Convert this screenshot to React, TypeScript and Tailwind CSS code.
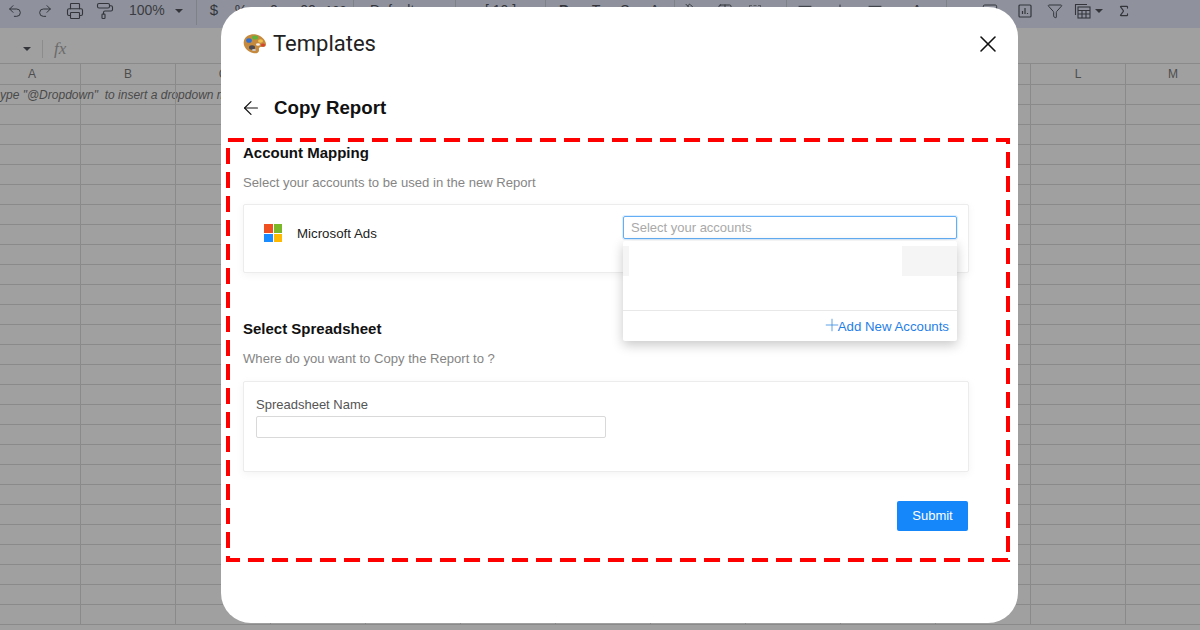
import React from "react";
import {
  AlignLeft,
  ArrowDownToLine,
  ArrowLeft,
  Funnel,
  MessageSquare,
  PaintBucket,
  PaintRoller,
  Plus,
  Printer,
  Redo2,
  Sigma,
  Table,
  Undo2,
  WrapText,
  X,
} from "lucide-react";

const columns = ["A", "B", "C", "D", "E", "F", "G", "H", "I", "J", "K", "L", "M"];
const rows = Array.from({ length: 27 }, (_, i) => i);

const Caret = () => (
  <span className="block h-0 w-0 border-x-[4px] border-t-[4px] border-x-transparent border-t-[#33353b]" />
);

const ToolbarDivider = () => <span className="h-[28px] w-px bg-[#7f8189]" />;

const Toolbar = () => (
  <div className="flex h-[28px] items-center overflow-hidden bg-[#8f929d] pb-[7px] text-[#33353b] [&>*]:shrink-0">
    <div className="flex w-[30px] justify-center"><Undo2 size={16} strokeWidth={1.5} /></div>
    <div className="flex w-[29px] justify-center"><Redo2 size={16} strokeWidth={1.5} /></div>
    <div className="flex w-[31px] justify-center"><Printer size={18} strokeWidth={1.5} /></div>
    <div className="flex w-[30px] justify-center"><PaintRoller size={18} strokeWidth={1.5} /></div>
    <div className="w-[49px] pl-[9px] text-[14px] text-[#3a3c42]">100%</div>
    <div className="w-[27px] pl-[6px]"><Caret /></div>
    <ToolbarDivider />
    <div className="w-[34px] text-center text-[15px]">$</div>
    <div className="w-[20px] text-center text-[14px]">%</div>
    <div className="w-[42px] text-center text-[14px]">.0</div>
    <div className="w-[26px] text-center text-[14px]">.00</div>
    <div className="w-[34px] text-center text-[13px]">123</div>
    <ToolbarDivider />
    <div className="w-[101px] pl-[16px] text-[14px]">Default</div>
    <ToolbarDivider />
    <div className="w-[89px] pl-[29px] text-[14px]">[ 10 ]</div>
    <ToolbarDivider />
    <div className="w-[36px] text-center text-[14px] font-bold">B</div>
    <div className="w-[26px] text-center text-[14px] italic">T</div>
    <div className="w-[34px] text-center text-[14px]">S</div>
    <div className="w-[32px] pl-[8px] text-[14px]">A</div>
    <ToolbarDivider />
    <div className="flex w-[30px] justify-center"><PaintBucket size={16} strokeWidth={1.5} /></div>
    <div className="flex w-[40px] justify-center"><Table size={16} strokeWidth={1.5} /></div>
    <div className="flex w-[20px] justify-center"><span className="h-[12px] w-[12px] border border-dashed border-[#5a5c63]" /></div>
    <div className="w-[21px]" />
    <ToolbarDivider />
    <div className="flex w-[36px] justify-center"><AlignLeft size={16} strokeWidth={1.5} /></div>
    <div className="flex w-[34px] justify-center"><ArrowDownToLine size={16} strokeWidth={1.5} /></div>
    <div className="flex w-[36px] justify-center"><WrapText size={16} strokeWidth={1.5} /></div>
    <div className="w-[48px] text-center text-[14px]">A</div>
    <div className="w-[5px]" />
    <ToolbarDivider />
    <div className="flex w-[61px] justify-end pr-[10px]"><MessageSquare size={16} strokeWidth={1.5} /></div>
    <div className="flex w-[34px] justify-center">
      <svg width="16" height="16" viewBox="0 0 16 16" fill="none" stroke="#33353b" strokeWidth="1.2">
        <rect x="2" y="2" width="12" height="12" rx="1" />
        <path d="M5.500 11V8M8 11V5M10.500 11v-1" />
      </svg>
    </div>
    <div className="flex w-[26px] justify-center"><Funnel size={16} strokeWidth={1.5} /></div>
    <div className="flex w-[40px] items-center pl-[6px]">
      <svg width="18" height="18" viewBox="0 0 18 18" fill="none" stroke="#33353b" strokeWidth="1.1">
        <path d="M1.500 13V2.500H13" />
        <rect x="4" y="5" width="12" height="11" />
        <path d="M4 8.500h12M4 12h12M8 8.500V16M12 8.500V16" />
      </svg>
      <span className="ml-[3px]"><Caret /></span>
    </div>
    <div className="flex w-[32px] justify-center"><Sigma size={14} strokeWidth={2} /></div>
  </div>
);

const FormulaBar = () => (
  <div className="flex h-[35px] items-center bg-[#a0a0a0] pl-[23px] pt-[7px]">
    <Caret />
    <span className="ml-[11px] h-[18px] w-px bg-[#8c8c8c]" />
    <span className="ml-[11px] font-['Liberation_Serif',serif] text-[17px] italic text-[#6a6a6a]">fx</span>
  </div>
);

const Sheet = () => (
  <div className="bg-[#a0a0a0]">
    <div className="flex h-[22px] border-y border-[#8a8a8a]">
      {columns.map((col, i) => (
        <div
          key={col}
          className={`flex shrink-0 items-center justify-center border-r border-[#8a8a8a] text-[12px] text-[#4e4e4e] ${
            i === 0 ? "w-[81px]" : "w-[95px]"
          }`}
        >
          <span className={i === 0 ? "mr-[16px]" : ""}>{col}</span>
        </div>
      ))}
    </div>
    {rows.map((row) => (
      <div key={row} className="flex h-[20px] border-b border-[#8a8a8a]">
        {columns.map((col, i) => (
          <div
            key={col}
            className={`shrink-0 border-r border-[#8a8a8a] ${i === 0 ? "w-[81px]" : "w-[95px]"}`}
          >
            {row === 0 && i === 0 && (
              <span className="block whitespace-pre text-[12px] italic leading-[20px] text-[#4a4a4a]">
                {'ype "@Dropdown"  to insert a dropdown menu'}
              </span>
            )}
          </div>
        ))}
      </div>
    ))}
  </div>
);

const PaletteIcon = () => (
  <svg width="24" height="22" viewBox="0 0 24 22">
    <path
      d="M1 7.500C2.500 2.500 8 0.500 13 1.500c5 1 9.500 5 10 9.500.3 2.500-2 3.200-4 3-2-.2-3.500.3-3 2.600.4 2-1.500 4.200-5 3.700C5 19.500-.8 13.500 1 7.500z"
      fill="#c68a3e"
    />
    <ellipse cx="6" cy="7.500" rx="2.800" ry="2.300" fill="#2f6fd0" />
    <ellipse cx="12" cy="4.500" rx="3" ry="2" fill="#5fb23c" />
    <ellipse cx="17.500" cy="8" rx="2.500" ry="1.700" fill="#eec24c" />
    <ellipse cx="20" cy="12" rx="2" ry="1.500" fill="#d8402f" />
    <ellipse cx="15" cy="11.500" rx="2" ry="1.300" fill="#f2f2f2" />
    <ellipse cx="9" cy="14.500" rx="3" ry="2.200" fill="#4a4a55" />
    <ellipse cx="11" cy="17" rx="2" ry="1" fill="#c9ccd4" />
  </svg>
);

const MicrosoftLogo = () => (
  <div className="grid h-[18px] w-[18px] grid-cols-2 gap-px">
    <span className="bg-[#f0501f]" />
    <span className="bg-[#7ab827]" />
    <span className="bg-[#1a8cff]" />
    <span className="bg-[#ffb900]" />
  </div>
);

const AccountDropdown = () => (
  <div className="absolute left-0 top-[25px] z-10 flex h-[100px] w-[334px] flex-col rounded-[2px] bg-white shadow-[0_4px_12px_rgba(0,0,0,0.22)]">
    <div className="mt-[5px] flex h-[30px] justify-between">
      <span className="w-[6px] bg-[#f5f5f5]" />
      <span className="w-[55px] bg-[#f5f5f5]" />
    </div>
    <div className="mt-[34px] flex h-[31px] items-center justify-end border-t border-[#e8e8e8] pr-[8px] text-[13.25px] text-[#1f80e6]">
      <Plus className="-mr-[4px] mb-[3px] text-[#3d8fe0]" size={20} strokeWidth={1} />
      <span className="mt-[1px]">Add New Accounts</span>
    </div>
  </div>
);

const AccountCard = () => (
  <div className="mt-[11px] flex h-[69px] items-start rounded-[2px] border border-[#ececec] bg-white pl-[20px] shadow-[0_2px_8px_rgba(0,0,0,0.05)]">
    <div className="mt-[19px]"><MicrosoftLogo /></div>
    <span className="ml-[15px] mt-[21px] w-[81px] whitespace-nowrap text-[13.3px] leading-[16px] text-[#222222]">Microsoft Ads</span>
    <div className="relative ml-[245px] mt-[11px]">
      <div className="flex h-[23px] w-[334px] items-center rounded-[2px] border border-[#63aef5] pl-[7px] text-[13px] text-[#a9a9a9] shadow-[0_0_0_1px_rgba(24,144,255,0.15)]">
        Select your accounts
      </div>
      <AccountDropdown />
    </div>
  </div>
);

const SpreadsheetCard = () => (
  <div className="mt-[12px] h-[91px] rounded-[2px] border border-[#ececec] bg-white pl-[12px] pt-[15px] shadow-[0_2px_8px_rgba(0,0,0,0.05)]">
    <div className="text-[13px] leading-[16px] text-[#555555]">Spreadsheet Name</div>
    <div className="mt-[3px] h-[22px] w-[350px] rounded-[2px] border border-[#d9d9d9] bg-white" />
  </div>
);

const ReportModal = () => (
  <div className="absolute left-[221px] top-[7px] h-[616px] w-[797px] rounded-[30px] bg-white pl-[22px] pt-[25px] font-['Liberation_Sans',sans-serif]">
    <div className="flex h-[24px] w-[759px] items-center justify-between">
      <div className="flex items-center">
        <PaletteIcon />
        <span className="ml-[6px] font-['Roboto',sans-serif] text-[22px] leading-[24px] text-[#222222]">Templates</span>
      </div>
      <X size={28} strokeWidth={1.3} className="text-[#111111]" />
    </div>
    <div className="mt-[40px] flex h-[24px] items-center">
      <ArrowLeft size={22} strokeWidth={1.3} className="-ml-[3px] text-[#111111]" />
      <span className="ml-[12px] pt-[1px] text-[18.7px] font-bold text-[#111111]">Copy Report</span>
    </div>
    <div className="w-[726px]">
      <h2 className="mt-[23px] text-[15px] font-bold leading-[20px] text-[#111111]">Account Mapping</h2>
      <p className="mt-[10px] text-[13.1px] leading-[20px] text-[#858585]">Select your accounts to be used in the new Report</p>
      <AccountCard />
      <h2 className="mt-[46px] text-[15px] font-bold leading-[20px] text-[#111111]">Select Spreadsheet</h2>
      <p className="mt-[10px] text-[13.1px] leading-[20px] text-[#858585]">Where do you want to Copy the Report to ?</p>
      <SpreadsheetCard />
      <div className="mt-[29px] flex justify-end pr-px">
        <button className="h-[30px] w-[71px] rounded-[2px] bg-[#1587fb] text-[13px] text-white">Submit</button>
      </div>
    </div>
  </div>
);

// red dashed annotation drawn over the screenshot
const DashedFrame = () => (
  <svg className="absolute left-0 top-0 z-20" width="1200" height="630" fill="none" stroke="#ff0000" strokeWidth="4" strokeDasharray="16 8">
    <path d="M226 140H1010" strokeDashoffset="22" />
    <path d="M226 560H1010" strokeDashoffset="2" />
    <path d="M228 140V562" strokeDashoffset="16" />
    <path d="M1008 140V562" strokeDashoffset="12" />
  </svg>
);

export default function App() {
  return (
    <div className="relative h-[630px] w-[1200px] overflow-hidden bg-[#a0a0a0] font-['Liberation_Sans',sans-serif]">
      <Toolbar />
      <FormulaBar />
      <Sheet />
      <ReportModal />
      <DashedFrame />
    </div>
  );
}
